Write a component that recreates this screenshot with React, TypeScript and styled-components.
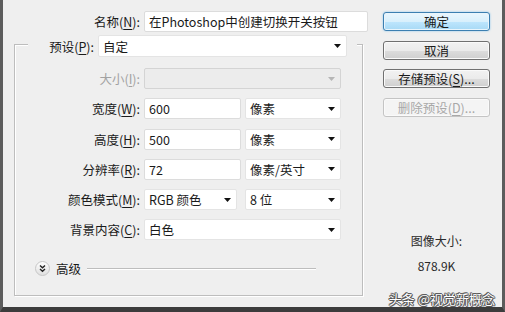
import React, { FC } from 'react';
import styled, { createGlobalStyle } from 'styled-components';

const GlobalStyle = createGlobalStyle`
  html, body {
    margin: 0;
    padding: 0;
    background: #efefef;
  }
  body {
    font-family: "Noto Sans CJK SC", "Noto Sans", sans-serif;
    color: #1a1a1a;
  }
  * {
    box-sizing: border-box;
  }
`;

const Dialog = styled.div`
  width: 505px;
  height: 312px;
  display: flex;
  background: #efefef;
  border-left: 3px solid #5c5c5c;
  border-right: 3px solid #5c5c5c;
  border-bottom: 5px solid #3c3c3c;
  overflow: hidden;
`;

const Main = styled.div`
  width: 370px;
  flex: none;
  padding: 11px 0 0 11px;
  display: flex;
  flex-direction: column;
`;

const NameRow = styled.div`
  display: flex;
  align-items: center;
  height: 21px;
`;

const Label = styled.span<{ $width: number }>`
  width: ${({ $width }) => $width}px;
  flex: none;
  text-align: right;
  padding-right: 4px;
  font-size: 12.5px;
  line-height: 21px;
  white-space: nowrap;
  u {
    text-underline-offset: 2px;
  }
`;

const TextField = styled.div<{ $width: number }>`
  width: ${({ $width }) => $width}px;
  height: 21px;
  background: #fff;
  border: 1px solid #dcdcdc;
  border-radius: 2px;
  padding: 0 4px;
  font-size: 12.5px;
  line-height: 19px;
  white-space: nowrap;
  overflow: hidden;
`;

const SelectBox = styled.div<{ $width: number; $height: number; $disabled?: boolean }>`
  width: ${({ $width }) => $width}px;
  height: ${({ $height }) => $height}px;
  display: flex;
  align-items: center;
  justify-content: space-between;
  background: ${({ $disabled }) => ($disabled ? '#ececec' : '#fff')};
  border: 1px solid ${({ $disabled }) => ($disabled ? '#d4d4d4' : '#e4e4e4')};
  border-radius: 2px;
  padding: 0 5px 0 4px;
  font-size: 12.5px;
  line-height: 19px;
  white-space: nowrap;
`;

const GroupBox = styled.div`
  width: 349px;
  height: 252px;
  margin-top: 12px;
  border: 1px solid #bdbdbd;
  box-shadow: 1px 1px 0 #fff, inset 1px 1px 0 #fff;
  display: flex;
  flex-direction: column;
`;

/* the preset row sits over the group's top edge, like a legend */
const Legend = styled.div`
  align-self: flex-start;
  display: flex;
  align-items: center;
  margin: -10px 0 0 13px;
  padding-right: 10px;
  background: #efefef;
`;

const Rows = styled.div`
  display: grid;
  grid-template-columns: 112px 97px 96px;
  grid-auto-rows: 21px;
  column-gap: 4px;
  row-gap: 9.25px;
  margin: 11px 0 0 13px;
`;

const GridLabel = styled.span<{ $disabled?: boolean }>`
  text-align: right;
  font-size: 12.5px;
  line-height: 21px;
  white-space: nowrap;
  color: ${({ $disabled }) => ($disabled ? '#a2a2a2' : '#1a1a1a')};
  u {
    text-underline-offset: 2px;
  }
`;

const Wide = styled.div`
  grid-column: span 2;
  display: flex;
`;

const Advanced = styled.div`
  display: flex;
  align-items: center;
  height: 16px;
  margin: 20px 0 0 20px;
  gap: 6px;
  font-size: 12.5px;
`;

const Rule = styled.div`
  width: 229px;
  height: 1px;
  background: #bdbdbd;
  box-shadow: 0 1px 0 #fff;
`;

const Side = styled.div`
  flex: 1;
  padding: 12px 5px 0 10px;
  display: flex;
  flex-direction: column;
`;

const Buttons = styled.div`
  width: 107px;
  display: flex;
  flex-direction: column;
  gap: 9.5px;
`;

const Button = styled.div<{ $primary?: boolean; $disabled?: boolean }>`
  height: 19px;
  border-radius: 3px;
  text-align: center;
  font-size: 12.5px;
  line-height: 17px;
  border: 1px solid
    ${({ $primary, $disabled }) =>
      $primary ? '#3c7fb1' : $disabled ? '#c4c4c4' : '#707070'};
  color: ${({ $disabled }) => ($disabled ? '#a8a8a8' : '#1a1a1a')};
  background: ${({ $primary, $disabled }) =>
    $primary
      ? 'linear-gradient(#eaf6fd 0%, #d9f0fc 50%, #bee6fd 51%, #a7d9f5 100%)'
      : $disabled
        ? '#f4f4f4'
        : 'linear-gradient(#f2f2f2 0%, #ebebeb 50%, #dddddd 51%, #cfcfcf 100%)'};
  box-shadow: ${({ $primary }) =>
    $primary ? '0 0 2px #7ec3ee, inset 0 0 0 1px #e9f5fc' : 'inset 0 0 0 1px #fafafa'};
  u {
    text-underline-offset: 2px;
  }
`;

const Info = styled.div`
  margin-top: 114px;
  width: 107px;
  text-align: center;
  font-size: 12px;
  line-height: 20px;
  color: #2a2a2a;
  display: flex;
  flex-direction: column;
  gap: 5px;
`;

const Watermark = styled.div`
  margin-top: 13px;
  text-align: right;
  font-size: 13px;
  line-height: 20px;
  color: #fff;
  white-space: nowrap;
  padding-right: 2px;
  text-shadow:
    -1px 0 #555, 1px 0 #555, 0 -1px #555, 0 1px #555,
    -1px -1px #777, 1px 1px #777;
`;

const Arrow: FC<{ disabled?: boolean }> = ({ disabled }) => (
  <svg width="7" height="4" viewBox="0 0 7 4">
    <path d="M0 0h7L3.5 4z" fill={disabled ? '#b5b5b5' : '#111'} />
  </svg>
);

const Chevron: FC = () => (
  <svg width="15" height="15" viewBox="0 0 15 15">
    <defs>
      <linearGradient id="chev" x1="0" y1="0" x2="0" y2="1">
        <stop offset="0" stopColor="#ffffff" />
        <stop offset="1" stopColor="#dedede" />
      </linearGradient>
    </defs>
    <circle cx="7.5" cy="7.5" r="7" fill="url(#chev)" stroke="#c6c6c6" />
    <path
      d="M5 4.5l2.5 2.2L10 4.5M5 8l2.5 2.2L10 8"
      fill="none"
      stroke="#222"
      strokeWidth="1.4"
    />
  </svg>
);

const Select: FC<{ width: number; value: string; height?: number; disabled?: boolean }> = ({
  width,
  value,
  height = 21,
  disabled,
}) => (
  <SelectBox $width={width} $height={height} $disabled={disabled}>
    <span>{value}</span>
    <Arrow disabled={disabled} />
  </SelectBox>
);

const App: FC = () => {
  return (
    <>
      <GlobalStyle />
      <Dialog>
        <Main>
          <NameRow>
            <Label $width={130}>
              名称(<u>N</u>):
            </Label>
            <TextField $width={224}>在Photoshop中创建切换开关按钮</TextField>
          </NameRow>

          <GroupBox>
            <Legend>
              <Label $width={70}>
                预设(<u>P</u>):
              </Label>
              <Select width={249} height={22} value="自定" />
            </Legend>

            <Rows>
              <GridLabel $disabled>
                大小(<u>I</u>):
              </GridLabel>
              <Wide>
                <Select width={197} value="" disabled />
              </Wide>

              <GridLabel>
                宽度(<u>W</u>):
              </GridLabel>
              <TextField $width={97}>600</TextField>
              <Select width={96} value="像素" />

              <GridLabel>
                高度(<u>H</u>):
              </GridLabel>
              <TextField $width={97}>500</TextField>
              <Select width={96} value="像素" />

              <GridLabel>
                分辨率(<u>R</u>):
              </GridLabel>
              <TextField $width={97}>72</TextField>
              <Select width={96} value="像素/英寸" />

              <GridLabel>
                颜色模式(<u>M</u>):
              </GridLabel>
              <Select width={93} value="RGB 颜色" />
              <Select width={96} value="8 位" />

              <GridLabel>
                背景内容(<u>C</u>):
              </GridLabel>
              <Wide>
                <Select width={197} value="白色" />
              </Wide>
            </Rows>

            <Advanced>
              <Chevron />
              <span>高级</span>
              <Rule />
            </Advanced>
          </GroupBox>
        </Main>

        <Side>
          <Buttons>
            <Button $primary>确定</Button>
            <Button>取消</Button>
            <Button>
              存储预设(<u>S</u>)...
            </Button>
            <Button $disabled>
              删除预设(<u>D</u>)...
            </Button>
          </Buttons>
          <Info>
            <span>图像大小:</span>
            <span>878.9K</span>
          </Info>
          <Watermark>头条 @视觉新概念</Watermark>
        </Side>
      </Dialog>
    </>
  );
};

export default App;
